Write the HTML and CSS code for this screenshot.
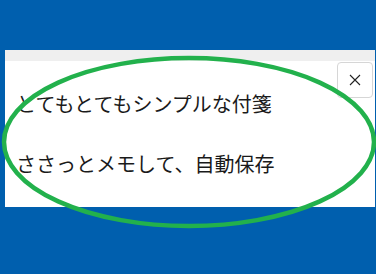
FILE: index.html
```html
<!DOCTYPE html>
<html lang="ja">
<head>
<meta charset="utf-8">
<link rel="stylesheet" href="styles.css">
</head>
<body>
<div class="screen">
  <div class="note">
    <div class="titlebar"></div>
    <div class="content">
      <div class="lines">
        <p class="line">とてもとてもシンプルな付箋</p>
        <p class="line">ささっとメモして、自動保存</p>
      </div>
      <button class="close" type="button" aria-label="閉じる">
        <svg width="12" height="12" viewBox="0 0 12 12"><path d="M1 1L11 11M11 1L1 11" stroke="#222" stroke-width="1.1" fill="none"/></svg>
      </button>
    </div>
  </div>
  <svg class="circle" width="376" height="274" viewBox="0 0 376 274">
    <ellipse cx="189" cy="142" rx="185" ry="84" fill="none" stroke="#22b14c" stroke-width="4.5"/>
  </svg>
</div>
</body>
</html>
```
FILE: styles.css
```css
html, body {
  margin: 0;
  padding: 0;
}
body {
  width: 376px;
  height: 274px;
  overflow: hidden;
  background: #005fae;
  font-family: "Noto Sans CJK JP", "Noto Sans", sans-serif;
}
.screen {
  position: relative;
  width: 376px;
  height: 274px;
  padding-top: 50px;
  padding-left: 5px;
  box-sizing: border-box;
}
.note {
  width: 370px;
  height: 157px;
  background: #ffffff;
  display: flex;
  flex-direction: column;
}
.titlebar {
  height: 11px;
  background: #efefef;
}
.content {
  flex: 1;
  display: flex;
  justify-content: space-between;
  align-items: flex-start;
}
.lines {
  padding-left: 11px;
  padding-top: 29px;
}
.line {
  margin: 0;
  font-size: 20px;
  line-height: 28px;
  color: #1a1a1a;
  white-space: nowrap;
}
.line + .line {
  margin-top: 32px;
}
.close {
  margin-top: 1px;
  margin-right: 2px;
  width: 36px;
  height: 36px;
  border: 1px solid #d6d6d6;
  border-radius: 4px;
  background: #ffffff;
  padding: 0;
  display: flex;
  align-items: center;
  justify-content: center;
}
.circle {
  position: absolute;
  left: 0;
  top: 0;
  pointer-events: none;
}
```
